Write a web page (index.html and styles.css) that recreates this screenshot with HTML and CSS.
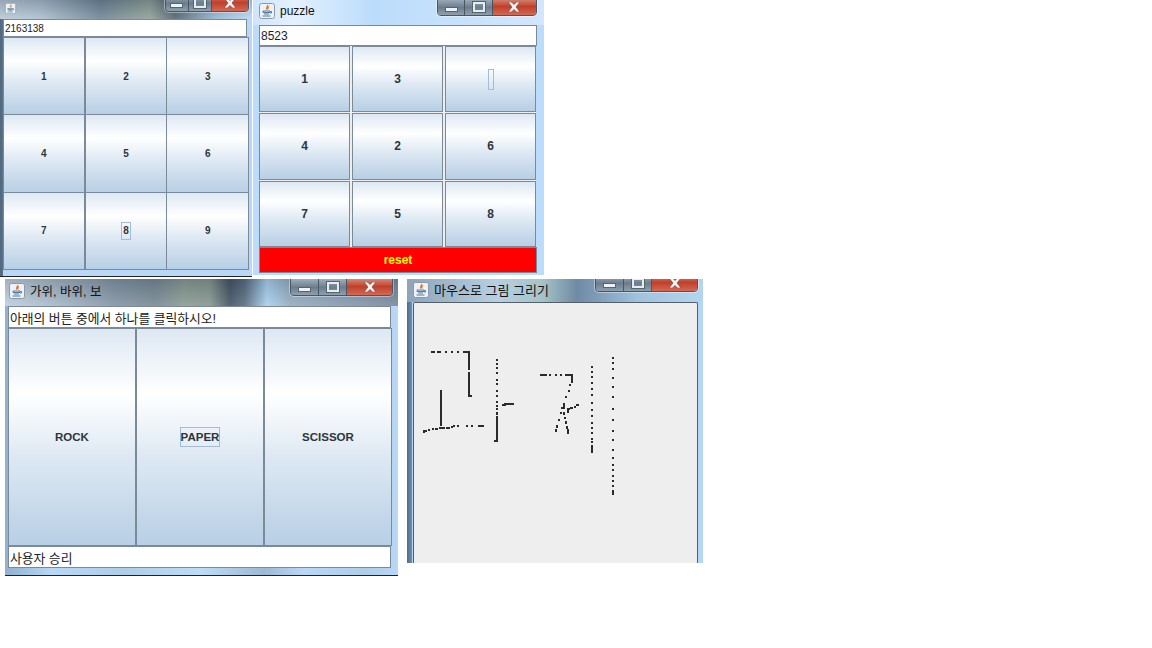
FILE: index.html
```html
<!DOCTYPE html>
<html lang="en">
<head>
<meta charset="utf-8">
<title>Java windows</title>
<link rel="stylesheet" href="styles.css">
</head>
<body>

<!-- icons used by every title bar -->
<svg class="defs" width="0" height="0">
  <symbol id="java" viewBox="0 0 16 16">
    <rect x="0.5" y="0.5" width="15" height="15" rx="2" fill="#eef2f7" stroke="#8c9aa8"/>
    <path d="M8.500 2c1 1.500-2 2.500-.8 4.500M10 3.500c-1.500 1-1.500 2-.8 3" fill="none" stroke="#e2761c" stroke-width="1.200"/>
    <path d="M4 8h7v1.500h-7zM5 11h5M3.500 13h8" fill="none" stroke="#4d7ba6" stroke-width="1"/>
    <path d="M11 8.500h1.500v1.500h-1.500" fill="none" stroke="#4d7ba6" stroke-width="1"/>
  </symbol>
  <symbol id="close" viewBox="0 0 14 10">
    <path d="M1 0h3.500l2.500 2.500 2.500-2.500h3.500l-4 5 4 5h-3.500l-2.500-2.500-2.500 2.500h-3.500l4-5z" fill="#f4f4f4" stroke="#6a3a30" stroke-width=".6"/>
  </symbol>
</svg>

<!-- number panel -->
<div class="win win-num">
  <div class="titlebar">
    <svg class="java"><use href="#java"/></svg>
    <div class="controls">
      <span class="ctl ctl-min"><i></i></span><span class="ctl ctl-max"><i></i></span><span class="ctl ctl-close"><svg class="x"><use href="#close"/></svg></span>
    </div>
  </div>
  <div class="field">2163138</div>
  <div class="grid">
    <button class="btn">1</button><button class="btn">2</button><button class="btn">3</button>
    <button class="btn">4</button><button class="btn">5</button><button class="btn">6</button>
    <button class="btn">7</button><button class="btn"><span class="focus">8</span></button><button class="btn">9</button>
  </div>
</div>

<!-- puzzle -->
<div class="win win-puzzle">
  <div class="titlebar">
    <svg class="java"><use href="#java"/></svg>
    <span class="title">puzzle</span>
    <div class="controls">
      <span class="ctl ctl-min"><i></i></span><span class="ctl ctl-max"><i></i></span><span class="ctl ctl-close"><svg class="x"><use href="#close"/></svg></span>
    </div>
  </div>
  <div class="field">8523</div>
  <div class="grid">
    <button class="btn">1</button><button class="btn">3</button><button class="btn"><span class="focus empty"></span></button>
    <button class="btn">4</button><button class="btn">2</button><button class="btn">6</button>
    <button class="btn">7</button><button class="btn">5</button><button class="btn">8</button>
  </div>
  <button class="reset">reset</button>
</div>

<!-- rock paper scissors -->
<div class="win win-rps">
  <div class="titlebar">
    <svg class="java"><use href="#java"/></svg>
    <span class="title">가위, 바위, 보</span>
    <div class="controls">
      <span class="ctl ctl-min"><i></i></span><span class="ctl ctl-max"><i></i></span><span class="ctl ctl-close"><svg class="x"><use href="#close"/></svg></span>
    </div>
  </div>
  <div class="field">아래의 버튼 중에서 하나를 클릭하시오!</div>
  <div class="grid">
    <button class="btn">ROCK</button>
    <button class="btn"><span class="focus">PAPER</span></button>
    <button class="btn">SCISSOR</button>
  </div>
  <div class="field">사용자 승리</div>
</div>

<!-- drawing -->
<div class="win win-draw">
  <div class="titlebar">
    <svg class="java"><use href="#java"/></svg>
    <span class="title">마우스로 그림 그리기</span>
    <div class="controls">
      <span class="ctl ctl-min"><i></i></span><span class="ctl ctl-max"><i></i></span><span class="ctl ctl-close"><svg class="x"><use href="#close"/></svg></span>
    </div>
  </div>
  <div class="canvas">
    <svg class="ink" viewBox="414 303 283 260">
      <path d="M431 352h4M437 352h4M445 352h2M451 352h2M457 352h2M463 352h7"/>
      <path d="M469 352v18M469 372v24h3"/>
      <path d="M441 390v36"/>
      <path d="M424 433v-2h3M428 430h2M432 429h2M435 429h3M439 428h6M446 428h4M451 427h2M453 426h2M457 426h2M466 426h2M471 426h2M478 426h6"/>
      <path d="M497 359v2M497 363v2M497 367v2M497 372v2M497 379v2M497 383v2M497 390v2M497 395v2M497 401v2M497 405v2M497 408v2M497 412v3M497 416v25h-3"/>
      <path d="M502 405h3v-1h9"/>
      <path d="M540 375h7M549 375h2M555 375h2M560 375h2M565 375h7v8"/>
      <path d="M570 384v2M569 390v2M566 396v2M564 403v3M563 408h-2M561 412v2M559 419v2M557 425v3M556 429v3"/>
      <path d="M564 406v3M564 412v3M565 417v2M566 421v3M567 426v3M568 429v5"/>
      <path d="M568 413v-4h2M570 408h3M574 407h2M576 405h3"/>
      <path d="M592 366v2M592 371v2M592 376v2M592 382v2M592 388v2M592 394v2M592 402v2M592 409v2M592 415v2M592 422v2M592 427v2M592 432v2M592 438v2M592 441v2M592 445v8"/>
      <path d="M613 357v2M613 362v2M613 368v2M613 377v2M613 386v2M613 396v2M613 408v2M613 419v2M613 430v2M613 439v2M613 449v2M613 457v2M613 464v2M613 469v2M613 475v2M613 480v2M613 485v2M613 490v5"/>
    </svg>
  </div>
</div>

</body>
</html>
```

FILE: styles.css
```css
html, body { margin: 0; background: #fff; }
body { width: 1152px; height: 648px; overflow: hidden; position: relative; font-family: "Liberation Sans", "Noto Sans CJK KR", sans-serif; }
.defs { position: absolute; }

.win {
  position: absolute;
  box-sizing: border-box;
  display: flex;
  flex-direction: column;
  overflow: hidden;
  background: #b9d8f7;
}
.win-num { left: 0; top: 0; width: 252px; height: 277px; padding: 0 4px 7px 3px; border-bottom: 1px solid #222; background: linear-gradient(90deg, #4f6880 0, #5b7188 3px, #b9d8f7 3px); }
.win-puzzle { left: 253px; top: 0; width: 291px; height: 275px; padding: 0 7px 2px 6px; background: #bcdcfb; }
.win-rps { left: 5px; top: 279px; width: 393px; height: 297px; padding: 0 6px 7px 3px; border-bottom: 1px solid #222; background: linear-gradient(90deg, #8fb0d0 0, #b9d8f7 12%, #aecde9 30%, #bcdcf7 50%, #9db9d4 66%, #b9d8f7 76%, #aecde9 92%, #b9d8f7 100%); }
.win-draw { left: 407px; top: 279px; width: 296px; height: 284px; padding: 0 5px 0 6px; background: linear-gradient(90deg, #4f6d8c 0, #6f8fae 5px, #b5d6f6 5px); }

.titlebar { position: relative; flex: none; display: flex; align-items: center; gap: 5px; font-size: 12px; color: #111; }
.win-num .titlebar { height: 19px; margin: 0 -4px 0 -3px; padding: 3px 0 6px 4px; box-sizing: border-box; background: linear-gradient(rgba(50,65,80,.25), rgba(255,255,255,.15)), linear-gradient(90deg, #b7c8d6 0, #a9bccd 40px, #6a8092 100px, #8a9c92 150px, #4a5c6c 175px, #8eb2cf 215px, #b7d6f2 252px); }
.win-puzzle .titlebar { height: 25px; margin: 0 -7px 0 -6px; padding: 0 0 4px 6px; box-sizing: border-box; background: linear-gradient(90deg, #cfe5fb 0, #e3f1ff 40px, #bcdcfb 120px, #d2e7fc 291px); }
.win-rps .titlebar { height: 27px; margin: 0 -6px 0 -3px; padding: 0 0 4px 4px; box-sizing: border-box; background: linear-gradient(rgba(50,65,80,.2), rgba(255,255,255,.15)), linear-gradient(90deg, #bccddb 0, #a3b6c6 45px, #7c8e9e 110px, #70828e 150px, #84968c 180px, #7e9088 205px, #3a4b5c 225px, #51667a 240px, #a5cdee 262px, #8fa8bc 285px, #6f8298 393px); }
.win-draw .titlebar { height: 23px; margin: 0 -5px 0 -6px; padding: 0 0 2px 6px; box-sizing: border-box; background: linear-gradient(90deg, #8ea5b9 0, #b7cfe2 90px, #a5c4c8 135px, #6f8aa4 170px, #9fc2de 230px, #b5d5ef 296px); }

.java { width: 16px; height: 16px; flex: none; }
.win-num .java { width: 13px; height: 11px; }
.win-rps .title { font-size: 12.5px; }
.win-draw .title { font-size: 13px; }

.controls { position: absolute; display: flex; height: 19px; box-sizing: border-box; border: 1px solid #4a5660; border-radius: 0 0 4px 4px; overflow: hidden; box-shadow: 0 0 0 1px rgba(255,255,255,.4); }
.win-num .controls { left: 165px; top: -7px; width: 84px; }
.win-puzzle .controls { left: 184px; top: -3px; width: 100px; }
.win-rps .controls { left: 285px; top: -2px; width: 103px; }
.win-draw .controls { left: 188px; top: -6px; width: 103px; }

.ctl { display: flex; align-items: center; justify-content: center; flex: 28; background: linear-gradient(#a5b4c2, #6b7d8d 55%, #8ea0b0); border-right: 1px solid #4a5660; }
.ctl i { display: block; }
.ctl-min i { width: 11px; height: 3px; background: #eef2f6; border: 1px solid #566; margin-top: 5px; }
.ctl-max i { width: 8px; height: 6px; border: 2px solid #e6ecf2; outline: 1px solid #566; }
.ctl-close { flex: 46; border: 0; background: linear-gradient(#d9907f, #c1402a 50%, #d06a55); }
.x { width: 14px; height: 10px; }

.field {
  flex: none;
  box-sizing: border-box;
  background: #fff;
  border: 1px solid #7a8a99;
  outline: 1px solid #fff;
  outline-offset: -2px;
  padding: 0 1px;
  color: #222;
  white-space: nowrap;
  display: flex;
  align-items: center;
}
.win-num .field { height: 18px; font-size: 10px; margin-right: 1px; }
.win-puzzle .field { height: 21px; font-size: 12px; }
.win-rps .field { height: 22px; font-size: 12.8px; margin-right: 1px; }

.grid { flex: 1; display: grid; grid-template-columns: repeat(3, 1fr); min-height: 0; }
.win-num .grid { grid-template-rows: repeat(3, 1fr); }
.win-num .btn { margin: 0 -1px -1px 0; }
.win-num .btn:nth-child(3n+1) { margin-right: 0; }
.win-puzzle .grid { grid-template-rows: repeat(3, 1fr); gap: 1px 2px; background: #eee; margin-right: 1px; }
.win-rps .grid { grid-template-rows: 1fr; }

.btn {
  display: flex;
  align-items: center;
  justify-content: center;
  min-width: 0;
  padding: 0;
  border: 1px solid #7a8a99;
  background: linear-gradient(#dde8f3 0, #fff 30%, #dde8f3 60%, #b8cfe5 100%);
  font: bold 12px "Liberation Sans", sans-serif;
  color: #2d3540;
}
.win-num .btn { font-size: 10px; }
.win-rps .btn { font-size: 11.5px; }
.focus { display: block; border: 1px solid #a3bdd8; padding: 1px 0; line-height: 16px; }
.win-num .focus { padding: 0 1px; }
.empty { width: 4px; height: 17px; }

.reset {
  flex: none;
  height: 26px;
  border: 1px solid #7a8a99;
  background: #f00;
  color: #ff0;
  font: bold 12px "Liberation Sans", sans-serif;
}

.canvas { flex: 1; box-sizing: border-box; background: #eee; border: 1px solid #555f68; border-bottom: 0; border-radius: 2px 2px 0 0; overflow: hidden; }
.ink { display: block; width: 100%; height: 100%; fill: none; stroke: #2b2b2b; stroke-width: 2; }
```
